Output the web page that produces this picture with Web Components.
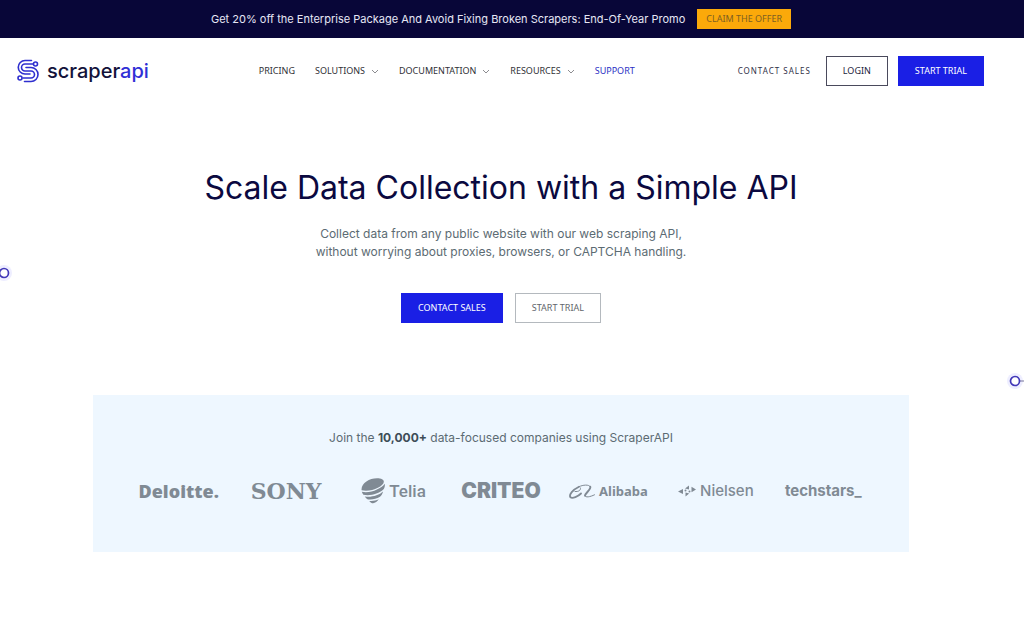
<!DOCTYPE html>
<html lang="en">
<head>
<meta charset="utf-8">
<meta name="viewport" content="width=device-width, initial-scale=1">
<title>ScraperAPI</title>
<style>
    body {
        margin: 0;
        background: #fff;
        color: #0a0a3c;
        font-family: Inter, "Liberation Sans", sans-serif;
        --gutter: 22px;
        --blue: #1a1fe5;
        --navy: #080638;
        --ui-font: "Noto Sans", "Open Sans", sans-serif;
    }
</style>
</head>
<body>
<scraper-page></scraper-page>

<script>
class PromoBar extends HTMLElement {
    constructor() {
        super();
        this.attachShadow({ mode: 'open' });
        this.shadowRoot.innerHTML = `
            <style>
                :host {
                    display: flex;
                    align-items: center;
                    justify-content: center;
                    gap: 12px;
                    min-height: 38px;
                    padding-right: var(--gutter);
                    background: var(--navy);
                    color: #e6e6f5;
                    font-size: 11px;
                    line-height: 16px;
                }
                a {
                    padding: 2px 9px;
                    background: #fba90a;
                    color: #7d5f22;
                    font-family: var(--ui-font);
                    font-size: 9px;
                    text-decoration: none;
                }
            </style>
            <span><slot></slot></span>
            <a href="#offer">CLAIM THE OFFER</a>
        `;
    }
}

class ActionButton extends HTMLElement {
    constructor() {
        super();
        this.attachShadow({ mode: 'open' });
        this.shadowRoot.innerHTML = `
            <style>
                :host {
                    display: block;
                }
                a {
                    display: block;
                    padding: 6px 16px;
                    border: 1px solid #4a4a5c;
                    color: #1c1c3c;
                    font-family: var(--ui-font);
                    font-size: 9px;
                    line-height: 16px;
                    text-decoration: none;
                    white-space: nowrap;
                }
                :host([kind="primary"]) a {
                    background: var(--blue);
                    border-color: var(--blue);
                    color: #fff;
                }
                :host([kind="muted"]) a {
                    border-color: #b4b9be;
                    color: #62666c;
                }
            </style>
            <a href="#"><slot></slot></a>
        `;
    }

    connectedCallback() {
        this.shadowRoot.querySelector('a').href = this.getAttribute('href') || '#';
    }
}

class BrandLogo extends HTMLElement {
    constructor() {
        super();
        this.attachShadow({ mode: 'open' });
        this.shadowRoot.innerHTML = `
            <style>
                :host {
                    display: block;
                }
                a {
                    display: flex;
                    align-items: center;
                    gap: 8px;
                    color: #12123a;
                    font-size: 20px;
                    font-weight: 500;
                    line-height: 24px;
                    text-decoration: none;
                }
                b {
                    color: #2f2fd6;
                    font-weight: 500;
                }
                svg {
                    display: block;
                }
            </style>
            <a href="#home">
                <svg width="22" height="24" viewBox="0 0 22 24" fill="none" stroke="#2f2fcf" stroke-width="1.6" stroke-linecap="round" aria-hidden="true">
                    <path d="M14.500 1.500H8a6.300 6.300 0 0 0 0 13.500H13"/>
                    <path d="M16 5H8a3.500 3.500 0 0 0 0 7H14a3.500 3.500 0 0 1 0 7H6"/>
                    <path d="M9 8.500H14a6.500 6.500 0 0 1 0 14H7.500"/>
                    <circle cx="18.500" cy="5" r="2" fill="#fff"/>
                    <circle cx="3" cy="19" r="2" fill="#fff"/>
                </svg>
                <span>scraper<b>api</b></span>
            </a>
        `;
    }
}

class NavItem extends HTMLElement {
    constructor() {
        super();
        this.attachShadow({ mode: 'open' });
        this.shadowRoot.innerHTML = `
            <style>
                :host {
                    display: block;
                }
                a {
                    display: flex;
                    align-items: center;
                    gap: 6px;
                    color: #303036;
                    font-family: var(--ui-font);
                    font-size: 9px;
                    line-height: 16px;
                    text-decoration: none;
                    white-space: nowrap;
                }
                svg {
                    display: none;
                }
                :host([menu]) svg {
                    display: block;
                }
                :host([current]) a {
                    color: #2b2fc4;
                }
            </style>
            <a href="#">
                <slot></slot>
                <svg width="8" height="5" viewBox="0 0 8 5" fill="none" stroke="#8c8c90" aria-hidden="true"><path d="M1 1l3 3 3-3"/></svg>
            </a>
        `;
    }

    connectedCallback() {
        this.shadowRoot.querySelector('a').href = this.getAttribute('href') || '#';
    }
}

class SiteHeader extends HTMLElement {
    constructor() {
        super();
        this.attachShadow({ mode: 'open' });
        this.shadowRoot.innerHTML = `
            <style>
                :host {
                    display: block;
                }
                header {
                    display: flex;
                    align-items: center;
                    justify-content: space-between;
                    padding: 18px 40px 18px 17px;
                }
                nav {
                    display: flex;
                    gap: 20px;
                    margin-left: 7px;
                }
                .actions {
                    display: flex;
                    align-items: center;
                    gap: 10px;
                }
                .sales {
                    margin-right: 5px;
                    color: #303048;
                    font-family: var(--ui-font);
                    font-size: 8px;
                    letter-spacing: 1px;
                    line-height: 16px;
                    text-decoration: none;
                }
            </style>
            <header>
                <brand-logo></brand-logo>
                <nav>
                    <nav-item href="#pricing">PRICING</nav-item>
                    <nav-item href="#solutions" menu>SOLUTIONS</nav-item>
                    <nav-item href="#documentation" menu>DOCUMENTATION</nav-item>
                    <nav-item href="#resources" menu>RESOURCES</nav-item>
                    <nav-item href="#support" current>SUPPORT</nav-item>
                </nav>
                <div class="actions">
                    <a class="sales" href="#sales">CONTACT SALES</a>
                    <action-button href="#login">LOGIN</action-button>
                    <action-button href="#trial" kind="primary">START TRIAL</action-button>
                </div>
            </header>
        `;
    }
}

class HeroSection extends HTMLElement {
    constructor() {
        super();
        this.attachShadow({ mode: 'open' });
        this.shadowRoot.innerHTML = `
            <style>
                :host {
                    display: block;
                    padding: 64px var(--gutter) 0 0;
                    text-align: center;
                }
                h1 {
                    margin: 0 0 17px;
                    color: #0b0940;
                    font-size: 32px;
                    font-weight: 400;
                    line-height: 40px;
                }
                p {
                    margin: 0 0 32px;
                    color: #5c6b73;
                    font-size: 12px;
                    line-height: 18px;
                }
                .buttons {
                    display: flex;
                    justify-content: center;
                    gap: 12px;
                }
            </style>
            <h1><slot name="title"></slot></h1>
            <p><slot name="text"></slot></p>
            <div class="buttons">
                <action-button href="#sales" kind="primary">CONTACT SALES</action-button>
                <action-button href="#trial" kind="muted">START TRIAL</action-button>
            </div>
        `;
    }
}

class CompanyLogo extends HTMLElement {
    constructor() {
        super();
        this.attachShadow({ mode: 'open' });
        this.shadowRoot.innerHTML = `
            <style>
                :host {
                    display: flex;
                    align-items: center;
                    justify-content: center;
                    gap: 4px;
                    height: 28px;
                    color: #808a94;
                    line-height: 28px;
                    white-space: nowrap;
                }
                :host([name="deloitte"]) { font: 800 18px/28px "Open Sans", sans-serif; }
                :host([name="sony"]) { font: 700 22px/28px "DejaVu Serif", serif; }
                :host([name="telia"]) { font: 500 17px/28px Roboto, sans-serif; }
                :host([name="criteo"]) { font: 900 21px/28px Inter, sans-serif; }
                :host([name="alibaba"]) { font: 700 13px/28px "Noto Sans", sans-serif; }
                :host([name="nielsen"]) { font: 500 15px/28px Inter, sans-serif; }
                :host([name="techstars"]) { font: 700 15px/28px Inter, sans-serif; }
            </style>
            <slot name="mark"></slot>
            <span><slot></slot></span>
        `;
    }
}

class CompanyPanel extends HTMLElement {
    constructor() {
        super();
        this.attachShadow({ mode: 'open' });
        this.shadowRoot.innerHTML = `
            <style>
                :host {
                    display: block;
                    padding: 72px calc(93px + var(--gutter)) 0 93px;
                }
                section {
                    padding: 34px 32px 47px;
                    background: #eef7ff;
                }
                p {
                    margin: 0 0 30px;
                    color: #5c6b73;
                    font-size: 12px;
                    line-height: 18px;
                    text-align: center;
                }
                strong {
                    color: #3d4d58;
                }
                .logos {
                    display: grid;
                    grid-template-columns: repeat(7, 1fr);
                }
                svg {
                    display: block;
                }
            </style>
            <section>
                <p>Join the <strong>10,000+</strong> data-focused companies using ScraperAPI</p>
                <div class="logos">
                    <company-logo name="deloitte">Deloitte.</company-logo>
                    <company-logo name="sony">SONY</company-logo>
                    <company-logo name="telia">
                        <svg slot="mark" width="24" height="26" viewBox="0 0 24 26" fill="#808a94" aria-hidden="true">
                            <path d="M.6 12.300C-.3 5.500 8 .2 16 .2c4.500 0 7 1.500 6.800 3.800C22.300 8.500 10 14.500.6 12.300z"/>
                            <path d="M.8 13.800c9 1.700 19-2.800 23-8 .3 2.300-.3 4.400-1.500 5.700C18 15.700 9 18.300 2.400 16.700 1.600 15.900 1.100 14.800.8 13.800z"/>
                            <path d="M3.800 18.400c7 1 14.200-1.300 18.300-5-.6 2-1.600 3.900-3.100 5.400-4 2.400-8 3.100-12.100 2.600-1.300-.7-2.400-1.800-3.100-3z"/>
                            <path d="M8.200 22.900c3.500.4 6.700-.2 9.600-1.600-2.500 3.600-6.400 5.800-9.600 1.600z"/>
                        </svg>
                        Telia
                    </company-logo>
                    <company-logo name="criteo">CRITEO</company-logo>
                    <company-logo name="alibaba">
                        <svg slot="mark" width="26" height="15" viewBox="0 0 26 15" fill="none" stroke="#808a94" stroke-linecap="round" aria-hidden="true">
                            <path d="M12 9.500C9 12.500 3.500 14.800 1.500 13.300-.5 11 4 5.500 10 2.700" stroke-width="1.800"/>
                            <path d="M10 2.700C14 .8 20 .2 21.300 2.700" stroke-width="1"/>
                            <path d="M21.300 2.700c.8 2.800-5 6.300-5.300 9" stroke-width="1.900"/>
                            <path d="M16 11.700c.3 2.200 5 1.300 9.500-.9" stroke-width="1"/>
                            <path d="M6 7.500c3.500.500 6-1.300 5.500-3.500" stroke-width="1"/>
                        </svg>
                        Alibaba
                    </company-logo>
                    <company-logo name="nielsen">
                        <svg slot="mark" width="18" height="12" viewBox="0 0 18 12" fill="#808a94" aria-hidden="true">
                            <path d="M0 6.500l5-2.500v5zM18 4.500l-4.500-2.700v5.400zM7 3.500L11 .5v4zM7.500 11.500v-4l3.700 1z"/>
                            <circle cx="7.500" cy="5.500" r="1"/>
                            <circle cx="11.500" cy="6.500" r="1"/>
                        </svg>
                        Nielsen
                    </company-logo>
                    <company-logo name="techstars">techstars_</company-logo>
                </div>
            </section>
        `;
    }
}

class ScraperPage extends HTMLElement {
    constructor() {
        super();
        this.attachShadow({ mode: 'open' });
        this.shadowRoot.innerHTML = `
            <style>
                :host {
                    display: block;
                    position: relative;
                    min-height: 100vh;
                    overflow: hidden;
                }
                /* circuit nodes that hang over the page edges */
                .node {
                    position: absolute;
                }
                .left {
                    left: -6px;
                    top: 263px;
                }
                .right {
                    right: -1px;
                    top: 371px;
                }
            </style>
            <promo-bar>Get 20% off the Enterprise Package And Avoid Fixing Broken Scrapers: End-Of-Year Promo</promo-bar>
            <site-header></site-header>
            <main>
                <hero-section>
                    <span slot="title">Scale Data Collection with a Simple API</span>
                    <span slot="text">Collect data from any public website with our web scraping API,<br>without worrying about proxies, browsers, or CAPTCHA handling.</span>
                </hero-section>
                <company-panel></company-panel>
            </main>
            <svg class="node left" width="20" height="20" viewBox="0 0 20 20" aria-hidden="true">
                <circle cx="10" cy="10" r="8" fill="#eeeeff"/>
                <circle cx="10" cy="10" r="4.500" fill="#fff" stroke="#4238b8" stroke-width="1.700"/>
            </svg>
            <svg class="node right" width="20" height="20" viewBox="0 0 20 20" aria-hidden="true">
                <circle cx="10" cy="10" r="8" fill="#eeeeff"/>
                <path d="M15 10h5" stroke="#77779a"/>
                <circle cx="10" cy="10" r="4.500" fill="#fff" stroke="#4238b8" stroke-width="1.700"/>
            </svg>
        `;
    }
}

customElements.define('promo-bar', PromoBar);
customElements.define('action-button', ActionButton);
customElements.define('brand-logo', BrandLogo);
customElements.define('nav-item', NavItem);
customElements.define('site-header', SiteHeader);
customElements.define('hero-section', HeroSection);
customElements.define('company-logo', CompanyLogo);
customElements.define('company-panel', CompanyPanel);
customElements.define('scraper-page', ScraperPage);
</script>
</body>
</html>
